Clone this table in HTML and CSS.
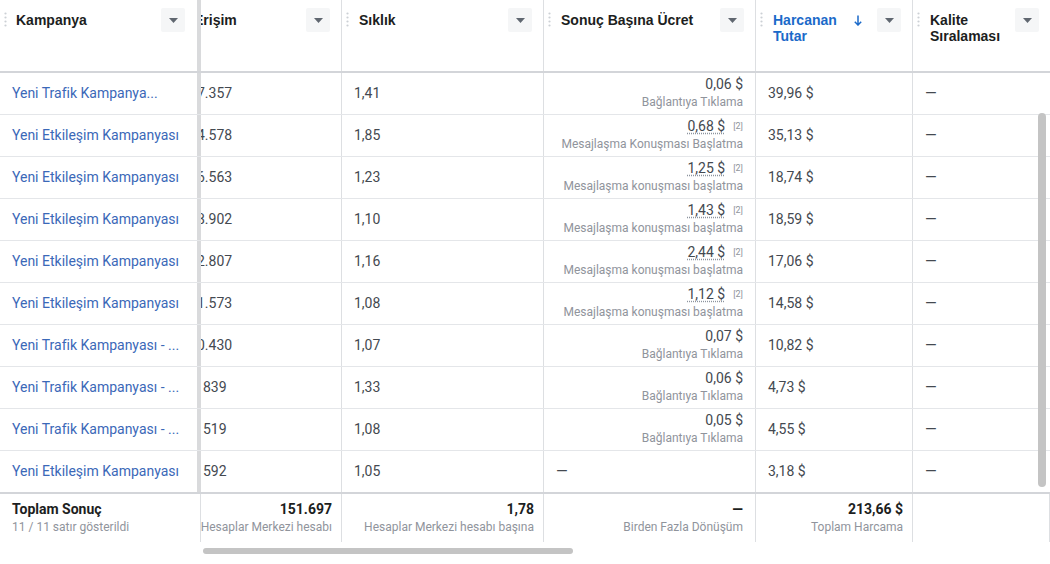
FILE: index.html
```html
<!DOCTYPE html>
<html lang="tr">
<head>
<meta charset="utf-8">
<title>Kampanyalar</title>
<link rel="stylesheet" href="styles.css">
</head>
<body>
<div class="page">
  <div class="table">
    <div class="row head">
      <div class="hcell">
        <svg class="grip" width="3" height="16" viewBox="0 0 3 16"><circle cx="1.5" cy="1.5" r="1.1"/><circle cx="1.5" cy="5.5" r="1.1"/><circle cx="1.5" cy="9.5" r="1.1"/><circle cx="1.5" cy="13.5" r="1.1"/></svg>
        <span class="hlabel">Kampanya</span>
        <span class="dd"><svg width="9" height="5" viewBox="0 0 9 5"><polygon points="0,0 9,0 4.5,5"/></svg></span>
      </div>
      <div class="divider"></div>
      <div class="hcell b h-reach">
        <span class="hlabel reach-label">Erişim</span>
        <span class="dd"><svg width="9" height="5" viewBox="0 0 9 5"><polygon points="0,0 9,0 4.5,5"/></svg></span>
      </div>
      <div class="hcell b">
        <svg class="grip" width="3" height="16" viewBox="0 0 3 16"><circle cx="1.5" cy="1.5" r="1.1"/><circle cx="1.5" cy="5.5" r="1.1"/><circle cx="1.5" cy="9.5" r="1.1"/><circle cx="1.5" cy="13.5" r="1.1"/></svg>
        <span class="hlabel">Sıklık</span>
        <span class="dd"><svg width="9" height="5" viewBox="0 0 9 5"><polygon points="0,0 9,0 4.5,5"/></svg></span>
      </div>
      <div class="hcell b">
        <svg class="grip" width="3" height="16" viewBox="0 0 3 16"><circle cx="1.5" cy="1.5" r="1.1"/><circle cx="1.5" cy="5.5" r="1.1"/><circle cx="1.5" cy="9.5" r="1.1"/><circle cx="1.5" cy="13.5" r="1.1"/></svg>
        <span class="hlabel">Sonuç Başına Ücret</span>
        <span class="dd"><svg width="9" height="5" viewBox="0 0 9 5"><polygon points="0,0 9,0 4.5,5"/></svg></span>
      </div>
      <div class="hcell b">
        <svg class="grip" width="3" height="16" viewBox="0 0 3 16"><circle cx="1.5" cy="1.5" r="1.1"/><circle cx="1.5" cy="5.5" r="1.1"/><circle cx="1.5" cy="9.5" r="1.1"/><circle cx="1.5" cy="13.5" r="1.1"/></svg>
        <span class="hlabel sorted">Harcanan Tutar</span>
        <svg class="sort" width="8" height="11" viewBox="0 0 8 11"><path d="M4 0.5 V10 M0.8 6.8 L4 10 L7.2 6.8" fill="none" stroke="#1b6ac9" stroke-width="1.5"/></svg>
        <span class="dd"><svg width="9" height="5" viewBox="0 0 9 5"><polygon points="0,0 9,0 4.5,5"/></svg></span>
      </div>
      <div class="hcell">
        <svg class="grip" width="3" height="16" viewBox="0 0 3 16"><circle cx="1.5" cy="1.5" r="1.1"/><circle cx="1.5" cy="5.5" r="1.1"/><circle cx="1.5" cy="9.5" r="1.1"/><circle cx="1.5" cy="13.5" r="1.1"/></svg>
        <span class="hlabel">Kalite Sıralaması</span>
        <span class="dd"><svg width="9" height="5" viewBox="0 0 9 5"><polygon points="0,0 9,0 4.5,5"/></svg></span>
      </div>
    </div>

    <div class="row brow">
      <div class="cell"><a class="link">Yeni Trafik Kampanya...</a></div>
      <div class="divider"></div>
      <div class="cell b reach"><span class="clip">7.357</span></div>
      <div class="cell b">1,41</div>
      <div class="cell b cost"><div class="val">0,06 $</div><div class="sub">Bağlantıya Tıklama</div></div>
      <div class="cell b">39,96 $</div>
      <div class="cell dash">—</div>
    </div>
    <div class="row brow">
      <div class="cell"><a class="link">Yeni Etkileşim Kampanyası</a></div>
      <div class="divider"></div>
      <div class="cell b reach"><span class="clip">4.578</span></div>
      <div class="cell b">1,85</div>
      <div class="cell b cost"><div class="val"><span class="dot">0,68 $</span><span class="note">[2]</span></div><div class="sub">Mesajlaşma Konuşması Başlatma</div></div>
      <div class="cell b">35,13 $</div>
      <div class="cell dash">—</div>
    </div>
    <div class="row brow">
      <div class="cell"><a class="link">Yeni Etkileşim Kampanyası</a></div>
      <div class="divider"></div>
      <div class="cell b reach"><span class="clip">6.563</span></div>
      <div class="cell b">1,23</div>
      <div class="cell b cost"><div class="val"><span class="dot">1,25 $</span><span class="note">[2]</span></div><div class="sub">Mesajlaşma konuşması başlatma</div></div>
      <div class="cell b">18,74 $</div>
      <div class="cell dash">—</div>
    </div>
    <div class="row brow">
      <div class="cell"><a class="link">Yeni Etkileşim Kampanyası</a></div>
      <div class="divider"></div>
      <div class="cell b reach"><span class="clip">8.902</span></div>
      <div class="cell b">1,10</div>
      <div class="cell b cost"><div class="val"><span class="dot">1,43 $</span><span class="note">[2]</span></div><div class="sub">Mesajlaşma konuşması başlatma</div></div>
      <div class="cell b">18,59 $</div>
      <div class="cell dash">—</div>
    </div>
    <div class="row brow">
      <div class="cell"><a class="link">Yeni Etkileşim Kampanyası</a></div>
      <div class="divider"></div>
      <div class="cell b reach"><span class="clip">2.807</span></div>
      <div class="cell b">1,16</div>
      <div class="cell b cost"><div class="val"><span class="dot">2,44 $</span><span class="note">[2]</span></div><div class="sub">Mesajlaşma konuşması başlatma</div></div>
      <div class="cell b">17,06 $</div>
      <div class="cell dash">—</div>
    </div>
    <div class="row brow">
      <div class="cell"><a class="link">Yeni Etkileşim Kampanyası</a></div>
      <div class="divider"></div>
      <div class="cell b reach"><span class="clip">1.573</span></div>
      <div class="cell b">1,08</div>
      <div class="cell b cost"><div class="val"><span class="dot">1,12 $</span><span class="note">[2]</span></div><div class="sub">Mesajlaşma konuşması başlatma</div></div>
      <div class="cell b">14,58 $</div>
      <div class="cell dash">—</div>
    </div>
    <div class="row brow">
      <div class="cell"><a class="link">Yeni Trafik Kampanyası - ...</a></div>
      <div class="divider"></div>
      <div class="cell b reach"><span class="clip">0.430</span></div>
      <div class="cell b">1,07</div>
      <div class="cell b cost"><div class="val">0,07 $</div><div class="sub">Bağlantıya Tıklama</div></div>
      <div class="cell b">10,82 $</div>
      <div class="cell dash">—</div>
    </div>
    <div class="row brow">
      <div class="cell"><a class="link">Yeni Trafik Kampanyası - ...</a></div>
      <div class="divider"></div>
      <div class="cell b reach"><span class="full">839</span></div>
      <div class="cell b">1,33</div>
      <div class="cell b cost"><div class="val">0,06 $</div><div class="sub">Bağlantıya Tıklama</div></div>
      <div class="cell b">4,73 $</div>
      <div class="cell dash">—</div>
    </div>
    <div class="row brow">
      <div class="cell"><a class="link">Yeni Trafik Kampanyası - ...</a></div>
      <div class="divider"></div>
      <div class="cell b reach"><span class="full">519</span></div>
      <div class="cell b">1,08</div>
      <div class="cell b cost"><div class="val">0,05 $</div><div class="sub">Bağlantıya Tıklama</div></div>
      <div class="cell b">4,55 $</div>
      <div class="cell dash">—</div>
    </div>
    <div class="row brow last">
      <div class="cell"><a class="link">Yeni Etkileşim Kampanyası</a></div>
      <div class="divider"></div>
      <div class="cell b reach"><span class="full">592</span></div>
      <div class="cell b">1,05</div>
      <div class="cell b dash">—</div>
      <div class="cell b">3,18 $</div>
      <div class="cell dash">—</div>
    </div>

    <div class="row foot">
      <div class="fcell left"><div class="ftitle">Toplam Sonuç</div><div class="sub">11 / 11 satır gösterildi</div></div>
      <div class="fdiv"></div>
      <div class="fcell b"><div class="ftitle">151.697</div><div class="sub">Hesaplar Merkezi hesabı</div></div>
      <div class="fcell b"><div class="ftitle">1,78</div><div class="sub">Hesaplar Merkezi hesabı başına</div></div>
      <div class="fcell b fcost"><div class="ftitle">—</div><div class="sub">Birden Fazla Dönüşüm</div></div>
      <div class="fcell b"><div class="ftitle">213,66 $</div><div class="sub">Toplam Harcama</div></div>
      <div class="fcell b"></div>
    </div>
  </div>
  <div class="hscroll"></div>
  <div class="vscroll"></div>
</div>
</body>
</html>
```

FILE: styles.css
```css
* { box-sizing: border-box; }
body {
  margin: 0;
  background: #ffffff;
  font-family: Roboto, "Liberation Sans", sans-serif;
  color: #444950;
}
.page {
  position: relative;
  width: 1050px;
  height: 564px;
  overflow: hidden;
  background: #ffffff;
}
.row {
  display: grid;
  grid-template-columns: 197px 4px 141px 202px 212px 157px 137px;
}
.b { border-right: 1px solid #dddfe2; }

/* header */
.head {
  height: 73px;
  border-bottom: 2px solid #d3d5d9;
}
.hcell {
  display: flex;
  align-items: flex-start;
  padding: 8px 11px 0 4px;
  overflow: hidden;
}
.hcell:first-child { padding-right: 12px; }
.grip {
  flex: none;
  margin-top: 4px;
  margin-right: 10px;
  fill: #ccd0d5;
}
.hcell:first-child .grip { margin-right: 9px; }
.hlabel {
  flex: 1;
  min-width: 0;
  margin-top: 4px;
  font-family: "Liberation Sans", Arial, sans-serif;
  font-weight: bold;
  font-size: 14px;
  line-height: 16px;
  color: #1c1e21;
}
.h-reach { padding-left: 0; }
.reach-label { margin-left: -7px; }
.sorted { color: #1b6ac9; }
.sort {
  flex: none;
  margin-top: 7px;
  margin-right: 15px;
}
.dd {
  flex: none;
  width: 24px;
  height: 24px;
  background: #f5f6f7;
  border-radius: 2px;
  display: flex;
  align-items: center;
  justify-content: center;
}
.dd svg { fill: #606770; }

.divider { background: #d9dadc; }

/* body rows */
.brow {
  height: 42px;
  border-bottom: 1px solid #e4e6e9;
}
.brow.last {
  height: 41px;
  border-bottom: none;
}
.cell {
  display: flex;
  align-items: center;
  padding: 0 12px;
  font-size: 14px;
  line-height: 17px;
  white-space: nowrap;
  overflow: hidden;
  color: #444950;
}
.dash { font-size: 15px; }
.link {
  color: #3b68b8;
  text-decoration: none;
}
.reach { padding-left: 0; }
.clip { margin-left: -4px; }
.full { margin-left: 2px; }
.cost {
  flex-direction: column;
  align-items: flex-end;
  justify-content: center;
}
.val {
  display: flex;
  align-items: center;
  font-size: 14px;
  line-height: 17px;
}
.dot {
  text-decoration: underline dotted #8d949e;
  text-underline-offset: 2px;
}
.note {
  margin-left: 8px;
  font-size: 9px;
  color: #90949c;
}
.sub {
  font-size: 12px;
  line-height: 18px;
  color: #90949c;
  white-space: nowrap;
}

/* footer */
.foot {
  height: 50px;
  border-top: 2px solid #d3d5d9;
}
.fcell {
  display: flex;
  flex-direction: column;
  justify-content: center;
  align-items: flex-end;
  padding: 0 9px 0 12px;
  overflow: hidden;
}
.fcell.left { align-items: flex-start; }
.fcost { padding-right: 12px; }
.fdiv { border-right: 1px solid #dddfe2; }
.ftitle {
  font-weight: 700;
  font-size: 14px;
  line-height: 17px;
  color: #1c1e21;
}

/* scrollbars */
.hscroll {
  margin: 6px 0 0 203px;
  width: 370px;
  height: 6px;
  border-radius: 3px;
  background: #c4c4c4;
}
.vscroll {
  position: absolute;
  left: 1038px;
  top: 113px;
  width: 8px;
  height: 374px;
  border-radius: 4px;
  background: #c4c4c4;
}
```
